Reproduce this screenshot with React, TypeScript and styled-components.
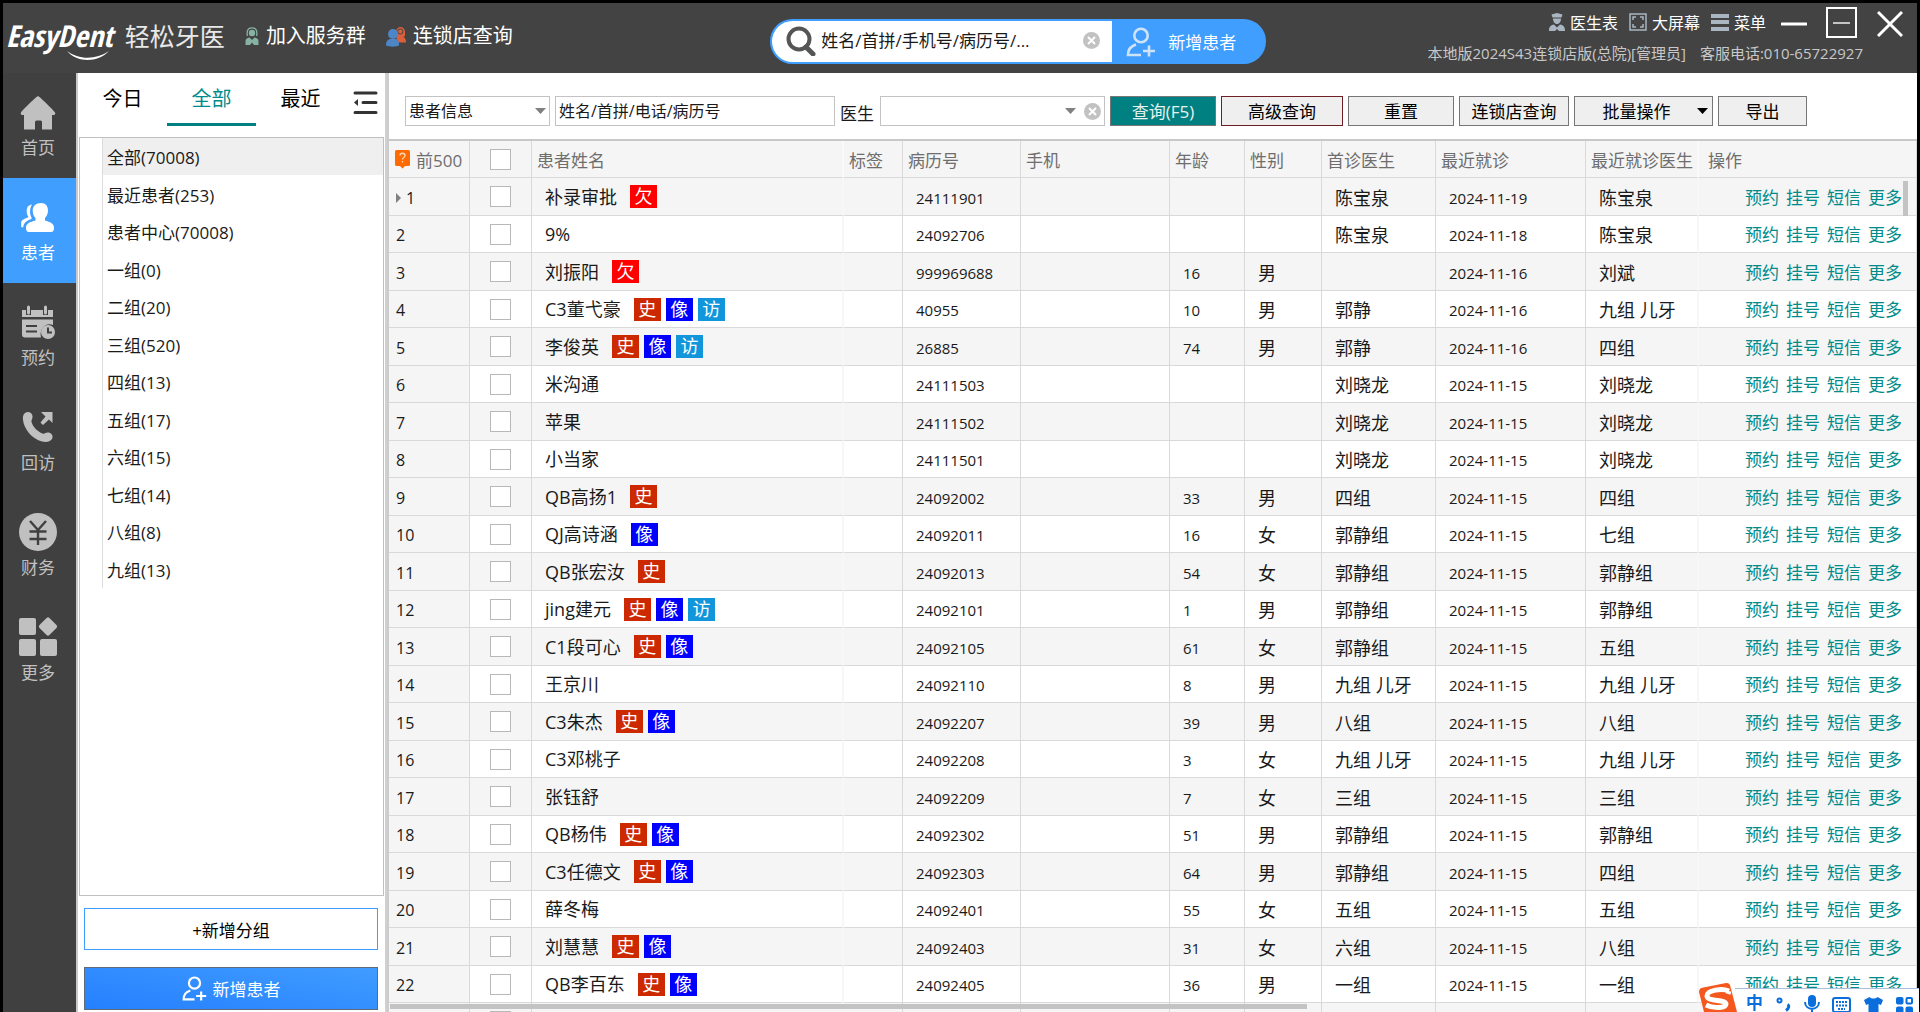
import React, { useState } from "react";
import styled, { createGlobalStyle, css } from "styled-components";

const latin = '"Open Sans", "Noto Sans CJK SC", sans-serif';

const Global = createGlobalStyle`
  * { box-sizing: border-box; }
  body { margin: 0; background: #000; font-family: ${latin}; font-size: 17px; color: #1a1a1a; overflow: hidden; }
  button, input, select { font-family: inherit; margin: 0; }
`;

const Window = styled.div`
  height: 100vh;
  display: flex;
  flex-direction: column;
  background: #404040;
  border: 3px solid #000;
  border-bottom: 0;
`;

/* ---------- title bar ---------- */

const TitleBar = styled.header`
  flex: none;
  height: 70px;
  display: grid;
  grid-template-columns: 1fr 496px 34%;
  background: #434343;
  color: #fff;
`;

const TitleLeft = styled.div`
  display: flex;
  align-items: center;
  gap: 20px;
  padding: 0 0 4px 3px;
  min-width: 0;
`;

const Brand = styled.div`
  position: relative;
  display: flex;
  align-items: center;
  gap: 12px;
  white-space: nowrap;
`;

const BrandName = styled.span`
  font: italic bold 30px/36px "Liberation Sans Narrow", "Open Sans Condensed", "Open Sans", sans-serif;
`;

const BrandCn = styled.span`
  font-size: 25px;
  line-height: 36px;
  color: #e8e8e8;
`;

const BrandSmile = styled.svg`
  position: absolute;
  left: 60px;
  top: 32px;
`;

const TopLink = styled.a`
  display: flex;
  align-items: center;
  gap: 7px;
  color: #fff;
  font-size: 20px;
  line-height: 28px;
  text-decoration: none;
  white-space: nowrap;
`;

const SearchPill = styled.form`
  display: flex;
  align-self: start;
  height: 45px;
  margin-top: 16px;
  border: 2px solid #409eff;
  border-radius: 23px;
  background: #409eff;
  overflow: hidden;
`;

const SearchField = styled.label`
  flex: 1;
  display: flex;
  align-items: center;
  gap: 5px;
  padding: 0 12px 2px 14px;
  background: #fff;
`;

const SearchInput = styled.input`
  flex: 1;
  min-width: 0;
  border: 0;
  outline: 0;
  padding: 0;
  background: none;
  font-size: 17px;
  color: #1a1a1a;
  &::placeholder { color: #1a1a1a; opacity: 1; }
`;

const IconButton = styled.button`
  display: flex;
  padding: 0;
  border: 0;
  background: none;
  color: inherit;
`;

const PillButton = styled.button`
  width: 152px;
  display: flex;
  align-items: center;
  gap: 12px;
  padding: 0 0 0 14px;
  border: 0;
  background: #409eff;
  color: #fff;
  font-size: 17px;
  white-space: nowrap;
`;

const TitleRight = styled.div`
  display: flex;
  flex-direction: column;
  align-items: flex-end;
  padding-right: 14px;
`;

const WindowTools = styled.div`
  display: flex;
  align-items: center;
  height: 37px;
  gap: 11px;
`;

const ToolLink = styled.button`
  display: flex;
  align-items: center;
  gap: 5px;
  padding: 0;
  border: 0;
  background: none;
  color: #fff;
  font-size: 16px;
  white-space: nowrap;
`;

const WindowButtons = styled.div`
  display: flex;
  align-items: center;
  gap: 19px;
  padding-left: 4px;
`;

const Version = styled.div`
  display: flex;
  gap: 14px;
  padding-right: 40px;
  font-size: 15px;
  line-height: 26px;
  color: #c8c8c8;
  white-space: nowrap;
`;

/* ---------- side navigation ---------- */

const Body = styled.div`
  flex: 1;
  min-height: 0;
  display: flex;
`;

const Nav = styled.nav`
  flex: none;
  width: 73px;
`;

const NavItem = styled.button<{ $active?: boolean }>`
  width: 100%;
  height: 105px;
  display: flex;
  flex-direction: column;
  align-items: center;
  justify-content: flex-end;
  gap: 4px;
  padding: 0 3px 17px 0;
  border: 0;
  background: ${(p) => (p.$active ? "#409eff" : "none")};
  color: ${(p) => (p.$active ? "#fff" : "#c0c0c0")};
  font-size: 17px;
  line-height: 26px;
`;

/* ---------- group panel ---------- */

const Panel = styled.aside`
  flex: none;
  width: 311px;
  display: flex;
  flex-direction: column;
  background: #fff;
  border-left: 2px solid #c9c9c9;
  border-right: 2px solid #d0d0d0;
`;

const Tabs = styled.div`
  display: flex;
  height: 64px;
`;

const Tab = styled.button<{ $active?: boolean }>`
  width: 89px;
  height: 53px;
  padding: 0 0 2px;
  border: 0;
  border-bottom: 3px solid ${(p) => (p.$active ? "#008080" : "transparent")};
  background: none;
  font-size: 20px;
  color: ${(p) => (p.$active ? "#008b8b" : "#000")};
`;

const CollapseButton = styled(IconButton)`
  align-self: flex-start;
  margin: 17px 0 0 8px;
`;

const Tree = styled.div`
  flex: 1;
  margin: 0 1px;
  padding-left: 22px;
  border: 1px solid #c0c0c0;
`;

const GroupList = styled.ul`
  margin: 0;
  padding: 0;
  list-style: none;
  border-left: 1px solid #dcdcdc;
`;

const Group = styled.li<{ $active?: boolean }>`
  height: 37px;
  &:nth-child(even) { height: 38px; }
  display: flex;
  align-items: center;
  padding: 0 4px 0 4px;
  font-size: 17px;
  background: ${(p) => (p.$active ? "#efefef" : "none")};
`;

const PanelActions = styled.div`
  display: flex;
  flex-direction: column;
  gap: 17px;
  padding: 12px 7px 2px 6px;
`;

const AddGroup = styled.button`
  height: 42px;
  border: 1px solid #409eff;
  background: #fff;
  font-size: 17px;
  color: #000;
`;

const AddPatient = styled.button`
  height: 43px;
  display: flex;
  align-items: center;
  justify-content: center;
  gap: 6px;
  border: 1px solid #5f6b7a;
  background: linear-gradient(10deg, #2580ff, #409cff);
  font-size: 17px;
  color: #fff;
`;

/* ---------- main area ---------- */

const Main = styled.main`
  flex: 1;
  min-width: 0;
  display: flex;
  flex-direction: column;
  background: #fff;
  border-left: 2px solid #cccccc;
`;

const Toolbar = styled.div`
  flex: none;
  height: 68px;
  display: flex;
  align-items: center;
  gap: 5px;
  padding: 10px 16px 0 16px;
  border-bottom: 2px solid #c8c8c8;
`;

const boxed = css`
  height: 30px;
  border: 1px solid #c3c3c3;
  border-radius: 0;
  background: #fff;
  padding: 0 3px;
  font-size: 16px;
  color: #1a1a1a;
  outline: 0;
`;

const SelectWrap = styled.div<{ $width: number }>`
  position: relative;
  flex: 0 1 ${(p) => p.$width}px;
  display: flex;
`;

const Select = styled.select`
  ${boxed}
  width: 100%;
  appearance: none;
`;

const SelectMarks = styled.span`
  position: absolute;
  right: 4px;
  top: 0;
  height: 30px;
  display: flex;
  align-items: center;
  gap: 8px;
`;

const TextInput = styled.input`
  ${boxed}
  flex: 0 1 280px;
  min-width: 0;
  &::placeholder { color: #1a1a1a; opacity: 1; }
`;

const FieldLabel = styled.label`
  padding: 2px 1px 0 0;
  font-size: 17px;
  white-space: nowrap;
`;

const ToolButton = styled.button<{ $width: number; $tone?: "primary" | "outlined"; $menu?: boolean }>`
  position: relative;
  flex: 0 1 ${(p) => p.$width}px;
  height: 30px;
  padding: 2px ${(p) => (p.$menu ? 14 : 0)}px 0 0;
  border: 1px solid ${(p) => (p.$tone === "outlined" ? "#6e2026" : "#767676")};
  background: ${(p) => (p.$tone === "primary" ? "#008080" : "#efefef")};
  color: ${(p) => (p.$tone === "primary" ? "#e6f2f2" : "#000")};
  font-size: 17px;
  line-height: 26px;
  white-space: nowrap;
`;

const MenuMark = styled.span`
  position: absolute;
  right: 4px;
  top: 0;
  height: 28px;
  display: flex;
  align-items: center;
`;

const Grid = styled.div`
  position: relative;
  flex: 1;
  min-height: 0;
  overflow: hidden;
`;

const Table = styled.table`
  width: 100%;
  table-layout: fixed;
  border-collapse: separate;
  border-spacing: 0;
`;

const cell = css`
  padding: 0 0 0 13px;
  border-right: 1px solid #d9d9d9;
  border-bottom: 1px solid #d9d9d9;
  text-align: left;
  white-space: nowrap;
  overflow: hidden;
  font-weight: 400;
`;

const Th = styled.th<{ $split?: boolean; $pad?: number }>`
  ${cell}
  height: 37px;
  padding-top: 1px;
  padding-left: ${(p) => p.$pad ?? 5}px;
  background: #f5f5f5;
  color: #6e6e6e;
  font-size: 17px;
  ${(p) => p.$split && "border-right: 2px solid #fafafa;"}
`;

const Tr = styled.tr`
  height: 37px;
  background: #fff;
  &:nth-child(odd) { background: #f5f5f5; }
  &:nth-child(odd) { height: 38px; }
`;

const Td = styled.td<{ $split?: boolean; $small?: boolean; $pad?: number }>`
  ${cell}
  line-height: 26px;
  padding-top: 2px;
  padding-left: ${(p) => p.$pad ?? 13}px;
  font-size: ${(p) => (p.$small ? 15 : 18)}px;
  ${(p) => p.$split && "border-right: 2px solid #f7f7f7;"}
`;

const NameTd = styled(Td)`
  padding-top: 0;
`;

const IndexTd = styled(Td)`
  background: #f5f5f5;
  font-size: 16px;
`;

const CheckTd = styled(Td)`
  padding: 0;
`;

const CheckTh = styled(Th)`
  padding: 0;
`;

const Check = styled.input`
  appearance: none;
  display: block;
  width: 21px;
  height: 21px;
  margin: 0 auto;
  border: 1px solid #b8b8b8;
  background: #fff;
`;

const Flow = styled.div<{ $gap: number }>`
  display: flex;
  align-items: center;
  gap: ${(p) => p.$gap}px;
`;

const Badges = styled.span`
  display: flex;
  gap: 5px;
  margin-left: 13px;
`;

const Badge = styled.span<{ $kind: string }>`
  width: 27px;
  height: 23px;
  line-height: 23px;
  font-size: 18px;
  text-align: center;
  color: #fff;
  background: ${(p) =>
    ({ 欠: "#ff0000", 史: "#cc2900", 像: "#0000ff", 访: "#1296db" } as Record<string, string>)[p.$kind]};
`;

const RowLink = styled.a`
  color: #008b8b;
  font-size: 17px;
  text-decoration: none;
`;

const VerticalBar = styled.div`
  position: absolute;
  right: 9px;
  top: 40px;
  width: 5px;
  height: 35px;
  background: #c3c3c3;
`;

const HorizontalBar = styled.div`
  position: absolute;
  left: 1px;
  bottom: 3px;
  width: 60%;
  height: 5px;
  background: #c3c3c3;
`;

/* ---------- input method bar ---------- */

const ImeBar = styled.div`
  position: fixed;
  right: 1px;
  bottom: 0;
  height: 24px;
  width: 184px;
  display: flex;
  align-items: flex-start;
  justify-content: space-between;
  padding: 6px 6px 0 11px;
  border-top: 1px solid #a9c0dc;
  background: #fff;
  color: #0a6edc;
`;

const ImeLogo = styled.svg`
  position: absolute;
  left: -37px;
  bottom: 0;
`;

const ImeText = styled.span`
  font-size: 17px;
  font-weight: 700;
  line-height: 16px;
`;

/* ---------- icons ---------- */

const ClearIcon = () => (
  <svg width="17" height="17" viewBox="0 0 17 17">
    <circle cx="8.500" cy="8.500" r="8.500" fill="#c2c2c2" />
    <path d="M5 5l7 7M12 5l-7 7" stroke="#fff" strokeWidth="2" />
  </svg>
);

const Arrow = ({ color = "#808080" }: { color?: string }) => (
  <svg width="11" height="6" viewBox="0 0 11 6">
    <path d="M0 0h11L5.500 6z" fill={color} />
  </svg>
);

const AddUserIcon = ({ size, color }: { size: number; color: string }) => (
  <svg width={size} height={size} viewBox="0 0 30 30" fill="none" stroke={color} strokeWidth="2.600">
    <circle cx="15" cy="8.500" r="6.700" />
    <path d="M10 17.500C5 19 2 22.500 2 28h13M17 24h12M23 18.500v11" />
  </svg>
);

const DoctorIcon = () => (
  <svg width="16" height="18" viewBox="0 0 16 18" fill="#a9b6c2">
    <path d="M2.500 1.500L8 0l5.500 1.500-1 3h-9zM4 5.500h8c0 3-1.500 5.500-4 5.500S4 8.500 4 5.500z" />
    <path d="M0 18c0-4 1.500-6 5-6.500l3 3 3-3c3.500.5 5 2.500 5 6.500h-6l-2-2-2 2z" />
  </svg>
);

const ServiceIcon = () => (
  <svg width="14" height="18" viewBox="0 0 14 18">
    <path d="M2.200 9V5.500C2.200 2.500 4 .8 7 .8s4.800 1.700 4.800 4.700V9" fill="none" stroke="#86b3a3" strokeWidth="1.300" />
    <circle cx="7" cy="6" r="3.200" fill="#86b3a3" />
    <path d="M0.500 18v-3.500C.5 12 2 10.800 4.500 10.500L7 13l2.500-2.500c2.500.3 4 1.500 4 4V18H9l-2-2.500L5 18z" fill="#86b3a3" />
  </svg>
);

const ChainIcon = () => (
  <svg width="20" height="21" viewBox="0 0 20 21">
    <path d="M10 6a4.500 5 0 019 0v4l-2 1c2.200.6 3 2 3 5.500h-9z" fill="#d9603b" />
    <circle cx="14.300" cy="5.500" r="2.600" fill="#d9603b" stroke="#434343" />
    <circle cx="7" cy="8" r="5" fill="#4c86c6" />
    <path d="M0 19.500C0 15 2 13 5 13h4c3 0 4 2 4 6.500-3 1.500-10 1.500-13 0z" fill="#4c86c6" />
  </svg>
);

const HomeIcon = () => (
  <svg width="36" height="36" viewBox="0 0 36 36" fill="currentColor">
    <path d="M18 1c1 0 16 14.500 17 16.500.7 1.700 0 2.500-1.500 2.500H32v14.500H22V27a1.500 1.500 0 00-1.500-1.500h-4A1.500 1.500 0 0015 27v7.500H4V20H2.500C1 20 .3 19 1 17.500 2 15.500 17 1 18 1z" />
  </svg>
);

const PatientsIcon = () => (
  <svg width="36" height="36" viewBox="0 0 36 36" fill="currentColor">
    <path d="M21 3c4.600 0 7 3 7 7.500 0 3-1.200 5.500-3 7.500v2.500c5 1.500 9 3 9 7 0 3-.8 4.500-3 4.500H9c-2.200 0-3-1.500-3-4.500 0-4 4-5.500 9.500-7V18c-2-2-2.800-4.500-2.800-7.500C12.700 6 16 3 21 3z" />
    <path d="M12 4.500c-3.500.3-5.500 3-5.300 7 .1 2.500.8 4 1.800 5.500C5 19 1.200 19.500 1.200 23v4l2 .5c.3-5 4-7 8.300-8.500v-1.500C9.500 14 9.500 8.500 12 4.500z" />
  </svg>
);

const CalendarIcon = () => (
  <svg width="36" height="36" viewBox="0 0 36 36" fill="none">
    <path d="M2 5h4v5h5V5h12v5h5V5h5v7H2z" fill="currentColor" />
    <path d="M8.500 2v6M25.500 2v6" stroke="currentColor" strokeWidth="3" strokeLinecap="round" />
    <path d="M2 14.500h31v5.500c-7-3-14 3-12 12.500H5c-2 0-3-1-3-3z" fill="currentColor" />
    <path d="M6 21h11M6 26.500h11" stroke="#404040" strokeWidth="2.200" />
    <circle cx="28" cy="27" r="7" fill="currentColor" />
    <path d="M28 22.500V27.500h4" stroke="#404040" strokeWidth="2" />
  </svg>
);

const CallIcon = () => (
  <svg width="36" height="36" viewBox="0 0 36 36" fill="currentColor">
    <path d="M5 3c3-2 7-.5 7.500 3 .4 2.500-1.500 4-1 6 1.500 5 6 9.500 11 11.500 2.500.8 3-1.500 6-1 3.500.5 5 4 3.500 6.500-2 3-6 3.500-10 2.500C12 29 4 19 3 10 2.700 7 3 4.500 5 3z" />
    <path d="M21 2h11.500v11l-3.500-3.500-6 5.500-2.500-2.500 5-6z" />
  </svg>
);

const MoneyIcon = () => (
  <svg width="38" height="38" viewBox="0 0 38 38">
    <circle cx="19" cy="19" r="19" fill="currentColor" />
    <path d="M11 8l8 9 8-9M19 17v15M10.500 18.500h17M10.500 26h17" stroke="#404040" strokeWidth="2.400" fill="none" />
  </svg>
);

const MoreIcon = () => (
  <svg width="40" height="40" viewBox="0 0 40 40" fill="currentColor">
    <rect x="1" y="2" width="17" height="17" rx="2" />
    <rect x="1" y="23" width="17" height="17" rx="2" />
    <rect x="22" y="23" width="17" height="17" rx="2" />
    <rect x="23" y="3.500" width="14" height="14" rx="2" transform="rotate(45 30 10.500)" />
  </svg>
);

/* ---------- data ---------- */

const navItems = [
  { label: "首页", icon: <HomeIcon /> },
  { label: "患者", icon: <PatientsIcon />, active: true },
  { label: "预约", icon: <CalendarIcon /> },
  { label: "回访", icon: <CallIcon /> },
  { label: "财务", icon: <MoneyIcon /> },
  { label: "更多", icon: <MoreIcon /> },
];

const groups = [
  "全部(70008)", "最近患者(253)", "患者中心(70008)", "一组(0)", "二组(20)", "三组(520)",
  "四组(13)", "五组(17)", "六组(15)", "七组(14)", "八组(8)", "九组(13)",
];

type Row = [name: string, tags: string, no: string, age: string, sex: string, first: string, date: string, last: string];

const rows: Row[] = [
  ["补录审批", "欠", "24111901", "", "", "陈宝泉", "2024-11-19", "陈宝泉"],
  ["9%", "", "24092706", "", "", "陈宝泉", "2024-11-18", "陈宝泉"],
  ["刘振阳", "欠", "999969688", "16", "男", "", "2024-11-16", "刘斌"],
  ["C3董弋豪", "史像访", "40955", "10", "男", "郭静", "2024-11-16", "九组 儿牙"],
  ["李俊英", "史像访", "26885", "74", "男", "郭静", "2024-11-16", "四组"],
  ["米沟通", "", "24111503", "", "", "刘晓龙", "2024-11-15", "刘晓龙"],
  ["苹果", "", "24111502", "", "", "刘晓龙", "2024-11-15", "刘晓龙"],
  ["小当家", "", "24111501", "", "", "刘晓龙", "2024-11-15", "刘晓龙"],
  ["QB高扬1", "史", "24092002", "33", "男", "四组", "2024-11-15", "四组"],
  ["QJ高诗涵", "像", "24092011", "16", "女", "郭静组", "2024-11-15", "七组"],
  ["QB张宏汝", "史", "24092013", "54", "女", "郭静组", "2024-11-15", "郭静组"],
  ["jing建元", "史像访", "24092101", "1", "男", "郭静组", "2024-11-15", "郭静组"],
  ["C1段可心", "史像", "24092105", "61", "女", "郭静组", "2024-11-15", "五组"],
  ["王京川", "", "24092110", "8", "男", "九组 儿牙", "2024-11-15", "九组 儿牙"],
  ["C3朱杰", "史像", "24092207", "39", "男", "八组", "2024-11-15", "八组"],
  ["C3邓桃子", "", "24092208", "3", "女", "九组 儿牙", "2024-11-15", "九组 儿牙"],
  ["张钰舒", "", "24092209", "7", "女", "三组", "2024-11-15", "三组"],
  ["QB杨伟", "史像", "24092302", "51", "男", "郭静组", "2024-11-15", "郭静组"],
  ["C3任德文", "史像", "24092303", "64", "男", "郭静组", "2024-11-15", "四组"],
  ["薛冬梅", "", "24092401", "55", "女", "五组", "2024-11-15", "五组"],
  ["刘慧慧", "史像", "24092403", "31", "女", "六组", "2024-11-15", "八组"],
  ["QB李百东", "史像", "24092405", "36", "男", "一组", "2024-11-15", "一组"],
];

const widths = [81, 62, 312, 59, 118, 149, 75, 77, 114, 150, 113];
const actions = ["预约", "挂号", "短信", "更多"];

export default function App() {
  const [tab, setTab] = useState("全部");
  return (
    <Window>
      <Global />
      <TitleBar>
        <TitleLeft>
          <Brand>
            <BrandName>EasyDent</BrandName>
            <BrandCn>轻松牙医</BrandCn>
            <BrandSmile width="44" height="10" viewBox="0 0 44 10">
              <path d="M1 1c12 9 29 9 42 0-11 12-32 12-42 0z" fill="#fff" />
            </BrandSmile>
          </Brand>
          <TopLink href="#service"><ServiceIcon />加入服务群</TopLink>
          <TopLink href="#chain"><ChainIcon />连锁店查询</TopLink>
        </TitleLeft>
        <SearchPill onSubmit={(e) => e.preventDefault()}>
          <SearchField>
            <svg width="30" height="30" viewBox="0 0 30 30" fill="none" stroke="#555">
              <circle cx="13" cy="13" r="10.500" strokeWidth="4" />
              <path d="M20 21l7 7" strokeWidth="5" strokeLinecap="round" />
            </svg>
            <SearchInput aria-label="搜索患者" placeholder="姓名/首拼/手机号/病历号/..." />
            <IconButton type="button" aria-label="清除"><ClearIcon /></IconButton>
          </SearchField>
          <PillButton type="button"><AddUserIcon size={30} color="#cfe3f8" />新增患者</PillButton>
        </SearchPill>
        <TitleRight>
          <WindowTools>
            <ToolLink><DoctorIcon />医生表</ToolLink>
            <ToolLink>
              <svg width="18" height="18" viewBox="0 0 18 18" fill="none" stroke="#a9b6c2">
                <rect x="1" y="1" width="16" height="16" strokeWidth="1.500" />
                <path d="M4 7V4h3M11 4h3v3M14 11v3h-3M7 14H4v-3" strokeWidth="1.500" />
              </svg>
              大屏幕
            </ToolLink>
            <ToolLink>
              <svg width="18" height="18" viewBox="0 0 18 18" fill="#a9b6c2">
                <path d="M0 1h18v4H0zM0 7h18v4H0zM0 14h18v4H0z" />
              </svg>
              菜单
            </ToolLink>
            <WindowButtons>
              <IconButton aria-label="最小化">
                <svg width="26" height="30" viewBox="0 0 26 30"><path d="M1 17h24" stroke="#fff" strokeWidth="3" strokeLinecap="round" /></svg>
              </IconButton>
              <IconButton aria-label="还原">
                <svg width="32" height="32" viewBox="0 0 32 32" fill="none">
                  <rect x="1" y="2" width="29" height="29" stroke="#fff" strokeWidth="2" />
                  <path d="M7 17h17" stroke="#c4c4c4" strokeWidth="2" />
                </svg>
              </IconButton>
              <IconButton aria-label="关闭">
                <svg width="26" height="30" viewBox="0 0 26 30"><path d="M1 5l24 24M25 5L1 29" stroke="#fff" strokeWidth="3" /></svg>
              </IconButton>
            </WindowButtons>
          </WindowTools>
          <Version>
            <span>本地版2024S43连锁店版(总院)[管理员]</span>
            <span>客服电话:010-65722927</span>
          </Version>
        </TitleRight>
      </TitleBar>

      <Body>
        <Nav>
          {navItems.map((n) => (
            <NavItem key={n.label} $active={n.active}>{n.icon}{n.label}</NavItem>
          ))}
        </Nav>

        <Panel>
          <Tabs>
            {["今日", "全部", "最近"].map((t) => (
              <Tab key={t} $active={t === tab} onClick={() => setTab(t)}>{t}</Tab>
            ))}
            <CollapseButton aria-label="收起">
              <svg width="25" height="25" viewBox="0 0 25 25" fill="none" stroke="#333" strokeWidth="3" strokeLinecap="round">
                <path d="M2 3h21M10 12.500h13M2 22.500h21" />
                <path d="M5 9v7l-4-3.500z" fill="#333" stroke="none" />
              </svg>
            </CollapseButton>
          </Tabs>
          <Tree>
            <GroupList>
              {groups.map((g, i) => <Group key={g} $active={i === 0}>{g}</Group>)}
            </GroupList>
          </Tree>
          <PanelActions>
            <AddGroup>+新增分组</AddGroup>
            <AddPatient><AddUserIcon size={25} color="#fff" />新增患者</AddPatient>
          </PanelActions>
        </Panel>

        <Main>
          <Toolbar>
            <SelectWrap $width={145}>
              <Select aria-label="查询范围"><option>患者信息</option></Select>
              <SelectMarks><Arrow /></SelectMarks>
            </SelectWrap>
            <TextInput aria-label="查询内容" placeholder="姓名/首拼/电话/病历号" />
            <FieldLabel htmlFor="doctor">医生</FieldLabel>
            <SelectWrap $width={225}>
              <Select id="doctor"><option></option></Select>
              <SelectMarks><Arrow /><ClearIcon /></SelectMarks>
            </SelectWrap>
            <ToolButton $width={106} $tone="primary">查询(F5)</ToolButton>
            <ToolButton $width={122} $tone="outlined">高级查询</ToolButton>
            <ToolButton $width={106}>重置</ToolButton>
            <ToolButton $width={110}>连锁店查询</ToolButton>
            <ToolButton $width={139} $menu>
              批量操作
              <MenuMark><Arrow color="#000" /></MenuMark>
            </ToolButton>
            <ToolButton $width={89}>导出</ToolButton>
          </Toolbar>
          <Grid>
            <Table>
              <colgroup>
                {widths.map((w, i) => <col key={i} width={w} />)}
                <col />
              </colgroup>
              <thead>
                <tr>
                  <Th $pad={6}>
                    <Flow $gap={6}>
                      <svg width="15" height="19" viewBox="0 0 15 19">
                        <path d="M1.500 0h12A1.500 1.500 0 0115 1.500v13a1.500 1.500 0 01-1.500 1.500H10l-2.500 2.500L5 16H1.500A1.500 1.500 0 010 14.500v-13A1.500 1.500 0 011.500 0z" fill="#ff6b00" />
                        <path d="M5 5.500c0-3 5-3 5 0 0 2-2.500 2-2.500 4M7.500 11v1.500" stroke="#ffd9b8" strokeWidth="1.300" fill="none" />
                      </svg>
                      前500
                    </Flow>
                  </Th>
                  <CheckTh><Check type="checkbox" aria-label="全选" /></CheckTh>
                  <Th $split>患者姓名</Th>
                  <Th>标签</Th>
                  <Th>病历号</Th>
                  <Th>手机</Th>
                  <Th>年龄</Th>
                  <Th>性别</Th>
                  <Th>首诊医生</Th>
                  <Th>最近就诊</Th>
                  <Th $split>最近就诊医生</Th>
                  <Th $pad={9}>操作</Th>
                </tr>
              </thead>
              <tbody>
                {rows.map(([name, tags, no, age, sex, first, date, last], i) => (
                  <Tr key={no}>
                    <IndexTd $pad={7}>
                      <Flow $gap={5}>
                        {i === 0 && <svg width="5" height="10" viewBox="0 0 5 10"><path d="M0 0l5 5-5 5z" fill="#808080" /></svg>}
                        {i + 1}
                      </Flow>
                    </IndexTd>
                    <CheckTd><Check type="checkbox" aria-label={`选择 ${name}`} /></CheckTd>
                    <NameTd $split>
                      <Flow $gap={0}>
                        {name}
                        <Badges>{tags.split("").map((t) => <Badge key={t} $kind={t}>{t}</Badge>)}</Badges>
                      </Flow>
                    </NameTd>
                    <Td />
                    <Td $small>{no}</Td>
                    <Td />
                    <Td $small>{age}</Td>
                    <Td>{sex}</Td>
                    <Td>{first}</Td>
                    <Td $small>{date}</Td>
                    <Td $split>{last}</Td>
                    <Td $pad={46}>
                      <Flow $gap={7}>{actions.map((a) => <RowLink key={a} href="#row">{a}</RowLink>)}</Flow>
                    </Td>
                  </Tr>
                ))}
                <Tr>
                  <IndexTd /><CheckTd><Check type="checkbox" aria-label="选择" /></CheckTd><Td $split />
                  <Td /><Td /><Td /><Td /><Td /><Td /><Td /><Td $split /><Td />
                </Tr>
              </tbody>
            </Table>
            <VerticalBar />
            <HorizontalBar />
          </Grid>
        </Main>
      </Body>

      <ImeBar>
        <ImeLogo width="40" height="30" viewBox="0 0 40 30">
          <path d="M3 6L28 1q3-.5 4 2l7 27H6L1 10q0-3 2-4z" fill="#f4581c" />
          <path d="M31 9C24 6 9 8 9 14c0 6 19 3 19 8 0 4-12 5-20 1M31 9l-1 3" fill="none" stroke="#fff" strokeWidth="5" />
        </ImeLogo>
        <ImeText>中</ImeText>
        <svg width="15" height="18" viewBox="0 0 15 18" fill="none" stroke="#0a6edc">
          <circle cx="3.500" cy="5.500" r="2" strokeWidth="2" />
          <path d="M11.500 9.500c2 1 1.500 4-1.500 6" strokeWidth="3" />
        </svg>
        <svg width="16" height="18" viewBox="0 0 16 18" fill="#0a6edc">
          <rect x="4" y="0" width="8" height="12" rx="4" />
          <path d="M1 7c0 9 14 9 14 0M8 14v4" fill="none" stroke="#0a6edc" strokeWidth="2" />
        </svg>
        <svg width="19" height="18" viewBox="0 0 19 18" fill="none" stroke="#0a6edc">
          <rect x="1" y="3" width="17" height="14" rx="2" strokeWidth="2" />
          <path d="M4 7h11M4 10.500h11M6 14h7" strokeWidth="2" strokeDasharray="2 1" />
        </svg>
        <svg width="19" height="18" viewBox="0 0 19 18" fill="#0a6edc">
          <path d="M5.500 2c2 2 6 2 8 0L19 5l-2 5-2.500-1v9h-10V9L2 10 0 5z" />
        </svg>
        <svg width="17" height="18" viewBox="0 0 17 18" fill="#0a6edc">
          <rect x="0" y="2" width="7.500" height="7.500" rx="2" />
          <rect x="10.500" y="3" width="5.500" height="5.500" rx="1" fill="none" stroke="#0a6edc" strokeWidth="2" />
          <rect x="0" y="11.500" width="7.500" height="7" rx="2" />
          <rect x="9.500" y="11.500" width="7.500" height="7" rx="2" />
        </svg>
      </ImeBar>
    </Window>
  );
}
